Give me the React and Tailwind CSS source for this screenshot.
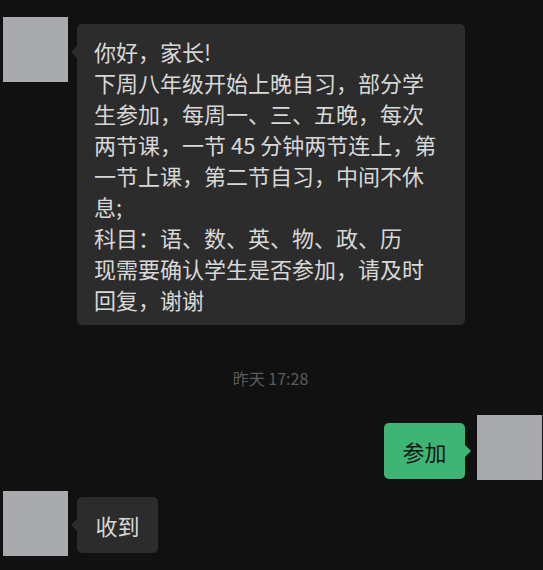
const font = { fontFamily: '"Noto Sans CJK SC", "Noto Sans", sans-serif' };

const lines = [
    "你好，家长!",
    "下周八年级开始上晚自习，部分学",
    "生参加，每周一、三、五晚，每次",
    "两节课，一节 45 分钟两节连上，第",
    "一节上课，第二节自习，中间不休",
    "息;",
    "科目：语、数、英、物、政、历",
    "现需要确认学生是否参加，请及时",
    "回复，谢谢",
];

function Avatar() {
    return <div className="w-[65px] h-[65px] shrink-0 bg-[#a9aaad]" />;
}

function LeftBubble({ children, className = "" }) {
    return (
        <div className={"relative rounded-[5px] bg-[#2c2c2c] text-[#d8d8d8] " + className}>
            <span className="absolute left-[-6px] top-[22px] w-0 h-0 border-y-[6px] border-y-transparent border-r-[6px] border-r-[#2c2c2c]" />
            {children}
        </div>
    );
}

export default function App() {
    return (
        <div className="w-[543px] h-[570px] bg-[#111111] overflow-hidden" style={font}>
            <div className="flex items-start pl-[3px] pt-[17px]">
                <Avatar />
                <LeftBubble className="ml-[9px] mt-[7px] w-[388px] pl-[17px] pt-[12px] pb-[10px] text-[22px] leading-[31px]">
                    {lines.map((l, i) => (
                        <div key={i} className="whitespace-nowrap">{l}</div>
                    ))}
                </LeftBubble>
            </div>

            <div className="mt-[42px] text-center text-[16px] leading-[22px] text-[#5b5b5b] pr-[2px]">
                昨天 17:28
            </div>

            <div className="mt-[26px] flex items-start justify-end pr-[1px]">
                <div className="relative mt-[8px] w-[81px] h-[56px] rounded-[5px] bg-[#3eb575] text-[#161616] text-[22px] flex items-center justify-center">
                    参加
                    <span className="absolute right-[-6px] top-[22px] w-0 h-0 border-y-[6px] border-y-transparent border-l-[6px] border-l-[#3eb575]" />
                </div>
                <div className="ml-[12px]">
                    <Avatar />
                </div>
            </div>

            <div className="mt-[11px] flex items-start pl-[3px]">
                <Avatar />
                <LeftBubble className="ml-[9px] mt-[6px] w-[81px] h-[56px] text-[22px] flex items-center justify-center">
                    收到
                </LeftBubble>
            </div>
        </div>
    );
}
